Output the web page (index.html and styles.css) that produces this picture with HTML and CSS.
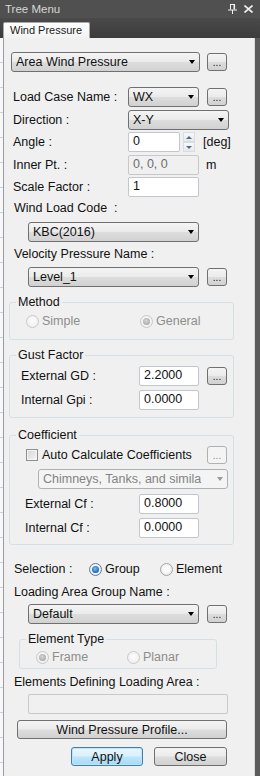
FILE: index.html
```html
<!DOCTYPE html>
<html>
<head>
<meta charset="utf-8">
<title>Tree Menu</title>
<link rel="stylesheet" href="styles.css">
</head>
<body>
<div class="win">
  <div class="titlebar">
    <span class="title">Tree Menu</span>
    <span class="tb-icons">
      <svg width="9" height="10" viewBox="0 0 9 10"><path d="M2 0.5H7M2.5 0.5V5.5M0 6H9M4.5 6V10" stroke="#f0f0f0" stroke-width="1" fill="none"/><rect x="5.5" y="0.5" width="1.6" height="5" fill="#f0f0f0"/></svg>
      <svg width="9" height="8" viewBox="0 0 9 8"><path d="M0.5 0.5L8.5 7.5M8.5 0.5L0.5 7.5" stroke="#f0f0f0" stroke-width="1.6" fill="none"/></svg>
    </span>
  </div>
  <div class="tabstrip">
    <div class="tab">Wind Pressure</div>
  </div>
  <div class="main">
    <div class="bgstrip"></div>
    <div class="panel">
      <div class="row top-row">
        <div class="combo w189"><span class="val">Area Wind Pressure</span><span class="arr"></span></div>
        <div class="dots">...</div>
      </div>

      <div class="form">
        <div class="frow">
          <span class="lbl">Load Case Name :</span>
          <div class="combo w71"><span class="val">WX</span><span class="arr"></span></div>
          <div class="dots ml8">...</div>
        </div>
        <div class="frow">
          <span class="lbl">Direction :</span>
          <div class="combo w101"><span class="val">X-Y</span><span class="arr"></span></div>
        </div>
        <div class="frow">
          <span class="lbl">Angle :</span>
          <div class="input w52">0</div>
          <div class="spin"><span class="sp up"></span><span class="sp dn"></span></div>
          <span class="unit deg">[deg]</span>
        </div>
        <div class="frow">
          <span class="lbl">Inner Pt. :</span>
          <div class="input dis w71">0, 0, 0</div>
          <span class="unit m">m</span>
        </div>
        <div class="frow">
          <span class="lbl">Scale Factor :</span>
          <div class="input w71">1</div>
        </div>
      </div>

      <div class="cap wlc">Wind Load Code&nbsp; :</div>
      <div class="row ind kbc">
        <div class="combo w171"><span class="val">KBC(2016)</span><span class="arr"></span></div>
      </div>
      <div class="cap vpn">Velocity Pressure Name :</div>
      <div class="row ind lvl">
        <div class="combo w171"><span class="val">Level_1</span><span class="arr"></span></div>
        <div class="dots">...</div>
      </div>

      <fieldset class="grp method">
        <legend>Method</legend>
        <div class="radios method-r">
          <div class="ropt dim w114"><span class="radio off"></span><span>Simple</span></div>
          <div class="ropt dim"><span class="radio off on"></span><span>General</span></div>
        </div>
      </fieldset>

      <fieldset class="grp gust">
        <legend>Gust Factor</legend>
        <div class="grow first">
          <span class="glbl">External GD :</span>
          <div class="input w60">2.2000</div>
          <div class="dots ml8">...</div>
        </div>
        <div class="grow g4">
          <span class="glbl">Internal Gpi :</span>
          <div class="input w60">0.0000</div>
        </div>
      </fieldset>

      <fieldset class="grp coef">
        <legend>Coefficient</legend>
        <div class="chkrow">
          <span class="chk"></span>
          <span class="chklbl">Auto Calculate Coefficients</span>
          <div class="dots light">...</div>
        </div>
        <div class="combo dcombo"><span class="val">Chimneys, Tanks, and simila</span><span class="arr"></span></div>
        <div class="crow c5">
          <span class="clbl">External Cf :</span>
          <div class="input w60">0.8000</div>
        </div>
        <div class="crow c4">
          <span class="clbl">Internal Cf :</span>
          <div class="input w60">0.0000</div>
        </div>
      </fieldset>

      <div class="selrow">
        <span class="sellbl">Selection :</span>
        <div class="ropt w71"><span class="radio sel"></span><span>Group</span></div>
        <div class="ropt"><span class="radio"></span><span>Element</span></div>
      </div>

      <div class="cap lagn">Loading Area Group Name :</div>
      <div class="row ind dflt">
        <div class="combo w171"><span class="val">Default</span><span class="arr"></span></div>
        <div class="dots">...</div>
      </div>

      <fieldset class="grp etype">
        <legend>Element Type</legend>
        <div class="radios etype-r">
          <div class="ropt dim w91"><span class="radio off on"></span><span>Frame</span></div>
          <div class="ropt dim"><span class="radio off"></span><span>Planar</span></div>
        </div>
      </fieldset>

      <div class="cap edla">Elements Defining Loading Area :</div>
      <div class="input dis empty"></div>
      <div class="btn wpp">Wind Pressure Profile...</div>
      <div class="btnrow">
        <div class="btn apply">Apply</div>
        <div class="btn close">Close</div>
      </div>
    </div>
    <div class="edge"></div>
  </div>
</div>
</body>
</html>
```

FILE: styles.css
```css
* { box-sizing: border-box; margin: 0; padding: 0; }
html, body { width: 260px; height: 776px; overflow: hidden; }
body {
  font-family: "Liberation Sans", Arial, sans-serif;
  font-size: 12.5px;
  color: #111;
  background: #4f4f4f;
}
.win { display: flex; flex-direction: column; height: 776px; }

/* title bar */
.titlebar {
  flex: 0 0 18px;
  display: flex;
  align-items: center;
  justify-content: space-between;
  padding: 0 7px 0 5px;
  background: #505050;
  color: #d6d6d6;
  font-size: 11.5px;
}
.tb-icons { display: flex; align-items: center; gap: 7px; }

/* tab strip */
.tabstrip {
  flex: 0 0 20px;
  display: flex;
  align-items: flex-end;
  padding-left: 3px;
  background: linear-gradient(#4a4a4a, #3c3c3c);
}
.tab {
  width: 87px;
  height: 16px;
  padding-left: 6px;
  border: 1px solid #a8a8a8;
  border-bottom: 0;
  border-radius: 2px 2px 0 0;
  background: linear-gradient(#ffffff, #f2f2f2);
  font-size: 11px;
  line-height: 15px;
  color: #1a1a1a;
}

/* main area */
.main { flex: 1; display: flex; min-height: 0; }
.bgstrip {
  flex: 0 0 3px;
  background: repeating-linear-gradient(#f7f8fa 0 24px, #c8d2de 24px 25px);
}
.panel {
  flex: 0 0 252px;
  display: flex;
  flex-direction: column;
  align-items: flex-start;
  padding: 14px 0 0 5px;
  background: #f0f0f0;
  border-left: 1px solid #9c9c9c;
  border-right: 1px solid #d8d8d8;
}
.edge { flex: 1; background: #5b5b5b; }

/* generic controls */
.row { display: flex; align-items: center; }
.top-row { padding-left: 2px; gap: 7px; }

.combo {
  display: flex;
  align-items: center;
  height: 20px;
  padding: 0 4px 0 4px;
  border: 1px solid #707070;
  border-radius: 3px;
  background: linear-gradient(#f4f4f4, #ebebeb 48%, #dddddd 52%, #d1d1d1);
  white-space: nowrap;
}
.combo .val { flex: 1; overflow: hidden; white-space: nowrap; }
.arr {
  flex: 0 0 auto;
  width: 0;
  height: 0;
  border-left: 3.5px solid transparent;
  border-right: 3.5px solid transparent;
  border-top: 4px solid #000;
}

.dots {
  flex: 0 0 20px;
  width: 20px;
  height: 18px;
  border: 1px solid #707070;
  border-radius: 3px;
  background: linear-gradient(#f4f4f4, #ebebeb 48%, #dddddd 52%, #d1d1d1);
  font-size: 10px;
  line-height: 10px;
  display: flex;
  align-items: flex-end;
  justify-content: center;
  padding-bottom: 2px;
  color: #111;
}
.dots.light {
  border-color: #adb2b5;
  background: #f4f4f4;
  color: #8a8a8a;
}
.ml8 { margin-left: 8px; }

.input {
  height: 20px;
  padding: 0 0 0 4px;
  line-height: 16px;
  background: #fff;
  border: 1px solid #c2c7cf;
  border-radius: 2px;
  white-space: nowrap;
}
.input.dis {
  background: #f0f0f0;
  border-color: #c8c8c8;
  color: #6d6d6d;
}

.w189 { width: 189px; }
.w171 { width: 171px; }
.w101 { width: 101px; }
.w71 { width: 71px; }
.w60 { width: 60px; }
.w52 { width: 52px; }

/* upper form */
.form {
  display: flex;
  flex-direction: column;
  gap: 2.5px;
  margin-top: 15px;
}
.frow { display: flex; align-items: center; height: 20px; }
.lbl { flex: 0 0 119px; padding-left: 4px; white-space: nowrap; }

.spin {
  margin-left: 3px;
  width: 12px;
  height: 20px;
  display: flex;
  flex-direction: column;
}
.sp {
  flex: 1;
  display: flex;
  align-items: center;
  justify-content: center;
  border: 1px solid #d9dde2;
  background: linear-gradient(#f9f9f9, #e8e8e8);
}
.sp::after {
  content: "";
  width: 0;
  height: 0;
  border-left: 3px solid transparent;
  border-right: 3px solid transparent;
}
.up::after { border-bottom: 3px solid #4f6b94; }
.dn::after { border-top: 3px solid #4f6b94; }

.unit { white-space: nowrap; }
.deg { margin-left: 8px; }
.m { margin-left: 7px; }

.cap { line-height: 14px; padding-left: 5px; white-space: nowrap; }
.wlc { margin-top: 4px; }
.ind { margin-left: 19px; gap: 8px; }
.kbc { margin-top: 7px; }
.vpn { margin-top: 5px; }
.lvl { margin-top: 6px; }

/* group boxes */
.grp {
  width: 225px;
  min-width: 0;
  border: 1px solid #d5dfe5;
  border-radius: 3px;
}
.grp legend {
  margin-left: 6px;
  padding: 0 2px;
  line-height: 14px;
}
.method { margin-top: 8px; }
.radios { display: flex; align-items: center; }
.method-r { padding: 4px 0 10px 16px; }

.ropt { display: flex; align-items: center; gap: 3px; height: 16px; white-space: nowrap; }
.ropt.dim { color: #8d8d8d; }
.w114 { width: 114px; }
.w91 { width: 91px; }

.radio {
  flex: 0 0 13px;
  width: 13px;
  height: 13px;
  border-radius: 50%;
  border: 1px solid #a6a6a6;
  background: radial-gradient(circle at 50% 45%, #ffffff 20%, #e4e4e4 90%);
  display: flex;
  align-items: center;
  justify-content: center;
}
.radio.off {
  border-color: #c9c9c9;
  background: radial-gradient(circle at 50% 45%, #fafafa 20%, #ececec 90%);
}
.radio.on::after {
  content: "";
  width: 7px;
  height: 7px;
  border-radius: 50%;
  background: radial-gradient(circle at 45% 40%, #d6d6d6, #9a9a9a);
}
.radio.sel { border-color: #5a7da3; }
.radio.sel::after {
  content: "";
  width: 7px;
  height: 7px;
  border-radius: 50%;
  background: radial-gradient(circle at 45% 40%, #7ec3f3, #1565b8 70%, #0b4c91);
}

.gust { margin-top: 8px; padding: 4px 0 7px 0; }
.grow { display: flex; align-items: center; height: 20px; padding-left: 11px; }
.g4 { margin-top: 4px; }
.glbl { flex: 0 0 118px; white-space: nowrap; }

.coef { margin-top: 10px; padding: 4px 0 6px 0; }
.chkrow {
  display: flex;
  align-items: center;
  height: 18px;
  padding: 0 6px 0 16px;
}
.chk {
  flex: 0 0 12px;
  width: 12px;
  height: 12px;
  border: 1px solid #8e8f8f;
  background: linear-gradient(135deg, #d4d4d4, #f6f6f6);
  box-shadow: inset 0 0 0 1px #f4f4f4;
}
.chklbl { margin-left: 4px; white-space: nowrap; }
.chkrow .dots { margin-left: auto; }
.dcombo {
  margin: 5px 0 0 28px;
  width: 190px;
  border-color: #adb2b5;
  background: #f4f4f4;
  color: #838383;
}
.dcombo .arr { border-top-color: #9a9a9a; }
.crow { display: flex; align-items: center; height: 20px; padding-left: 15px; }
.c5 { margin-top: 5px; }
.c4 { margin-top: 4px; }
.clbl { flex: 0 0 114px; white-space: nowrap; }

/* selection */
.selrow {
  display: flex;
  align-items: center;
  height: 16px;
  margin-top: 16px;
  padding-left: 5px;
}
.sellbl { flex: 0 0 75px; white-space: nowrap; }
.w71.ropt { width: 71px; }

.lagn { margin-top: 8px; }
.dflt { margin-top: 5px; }

.etype { margin: 8px 0 0 10px; width: 198px; }
.etype-r { padding: 3px 0 3px 16px; }

.edla { margin-top: 6px; }
.empty { margin: 5px 0 0 19px; width: 200px; }

.btn {
  height: 19px;
  display: flex;
  align-items: center;
  justify-content: center;
  border: 1px solid #707070;
  border-radius: 3px;
  background: linear-gradient(#f4f4f4, #ebebeb 48%, #dddddd 52%, #d1d1d1);
  white-space: nowrap;
}
.wpp { margin: 6px 0 0 8px; width: 210px; }
.btnrow { display: flex; gap: 11px; margin: 8px 0 0 62px; }
.apply {
  width: 72px;
  border-color: #3c7fb1;
  background: linear-gradient(#eaf6fd, #d9f0fc 48%, #bee6fd 52%, #a7d9f5);
  box-shadow: inset 0 0 0 1px #bfe3f7;
}
.close { width: 73px; }
```
